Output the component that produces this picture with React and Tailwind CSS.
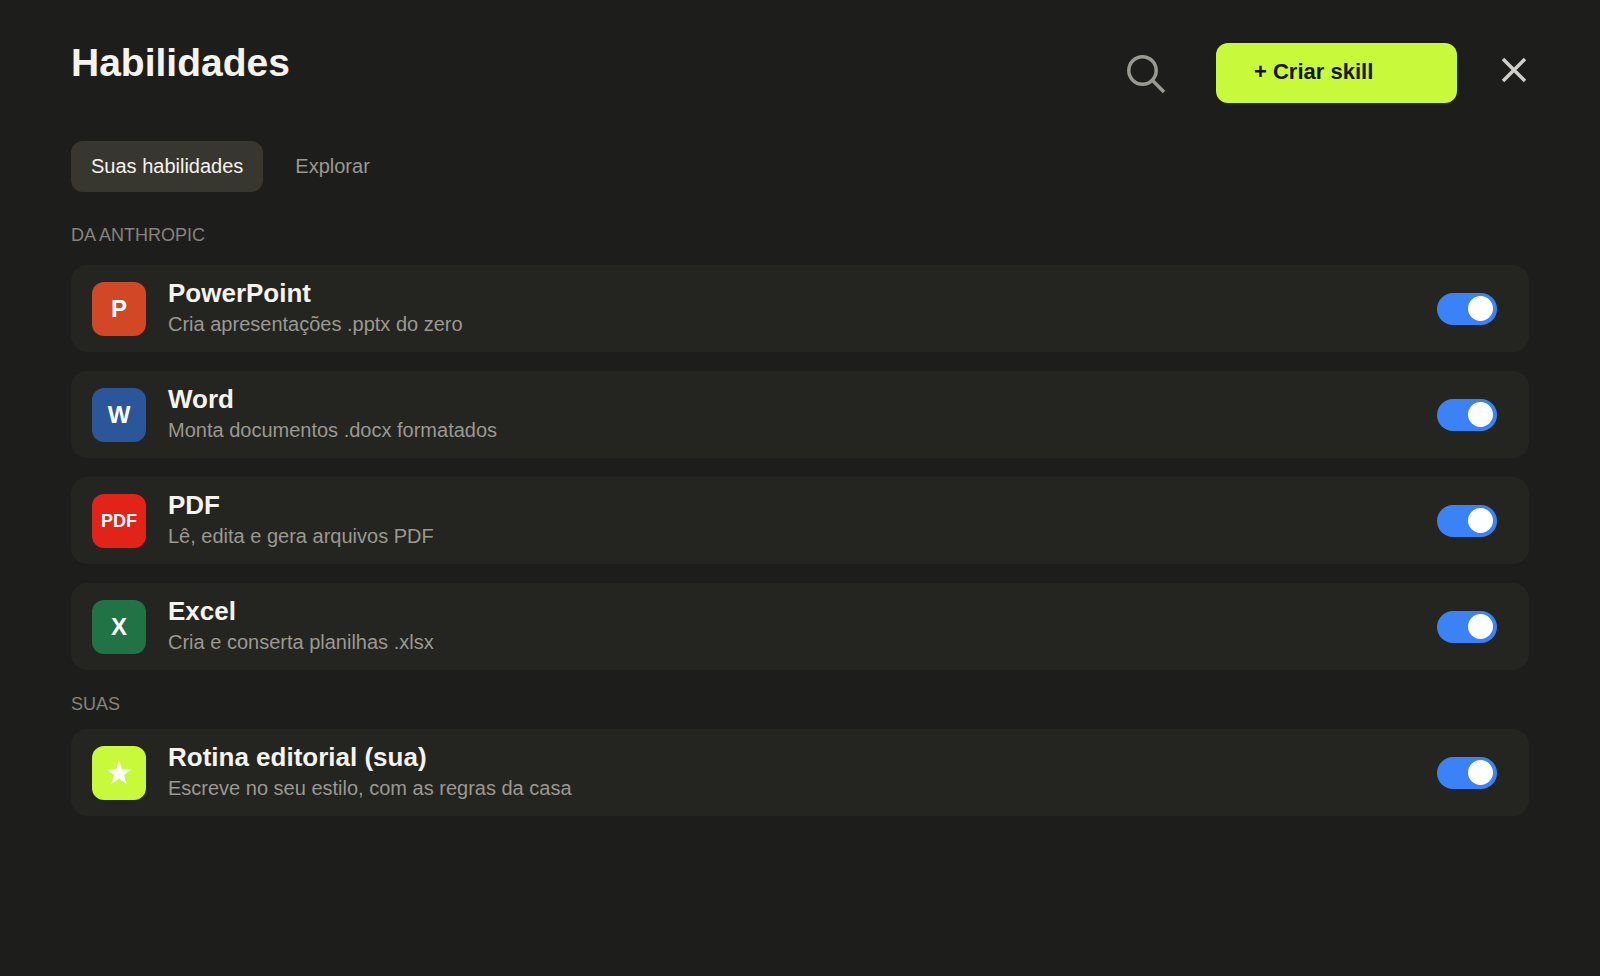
import { useState } from 'react';

const anthropicSkills = [
  { id: 'powerpoint', name: 'PowerPoint', description: 'Cria apresentações .pptx do zero', icon: 'P', iconClass: 'bg-[#d24726] text-2xl' },
  { id: 'word', name: 'Word', description: 'Monta documentos .docx formatados', icon: 'W', iconClass: 'bg-[#2b579a] text-2xl' },
  { id: 'pdf', name: 'PDF', description: 'Lê, edita e gera arquivos PDF', icon: 'PDF', iconClass: 'bg-[#e2231a] text-lg' },
  { id: 'excel', name: 'Excel', description: 'Cria e conserta planilhas .xlsx', icon: 'X', iconClass: 'bg-[#217346] text-2xl' },
];

const ownSkills = [
  { id: 'rotina', name: 'Rotina editorial (sua)', description: 'Escreve no seu estilo, com as regras da casa', icon: <StarIcon />, iconClass: 'bg-[#c8f93a]' },
];

function StarIcon() {
  return (
    <svg viewBox="0 0 26 26" className="size-[26px]" fill="#fff" aria-hidden="true">
      <path d="M13 0 16 9.2H25.6L17.9 14.9 20.8 24.2 13 18.5 5.2 24.2 8.1 14.9 0.4 9.2H10Z" />
    </svg>
  );
}

function SkillRow({ skill, enabled, onToggle }) {
  return (
    <li className="flex min-h-[87px] items-center rounded-2xl bg-[#242420] pl-[21px] pr-8">
      <div className={`flex size-[54px] shrink-0 items-center justify-center rounded-xl font-bold text-white ${skill.iconClass}`}>
        {skill.icon}
      </div>
      <label htmlFor={skill.id} className="ml-[22px] flex-1 pb-0.5">
        <span className="block text-[26px] font-bold leading-8 text-[#f4f3ee]">{skill.name}</span>
        <span className="block text-xl leading-[30px] text-[#9a9992]">{skill.description}</span>
      </label>
      <input
        id={skill.id}
        type="checkbox"
        role="switch"
        checked={enabled}
        onChange={onToggle}
        className="flex h-8 w-[60px] shrink-0 cursor-pointer appearance-none items-center rounded-full bg-[#4a4a45] px-1 before:size-[25px] before:rounded-full before:bg-white checked:justify-end checked:bg-[#3b82f6]"
      />
    </li>
  );
}

export default function SkillsPage() {
  const [tab, setTab] = useState('suas');
  const [disabled, setDisabled] = useState([]);

  const toggle = (id) => {
    setDisabled(disabled.includes(id) ? disabled.filter((d) => d !== id) : [...disabled, id]);
  };

  const tabClass = (name) =>
    name === tab ? 'bg-[#38372f] text-[#f4f3ee]' : 'text-[#9a9992]';

  const renderSkills = (skills) =>
    skills.map((skill) => (
      <SkillRow
        key={skill.id}
        skill={skill}
        enabled={!disabled.includes(skill.id)}
        onToggle={() => toggle(skill.id)}
      />
    ));

  return (
    <div className="min-h-screen bg-[#1d1d1b] px-[71px] pt-[43px] font-['Liberation_Sans',Arial,sans-serif]">
      <header className="flex items-start">
        <h1 className="flex-1 text-[39px] font-bold leading-10 text-[#f4f3ee]">Habilidades</h1>
        <div className="flex h-[60px] items-center">
          <button type="button" aria-label="Buscar" className="mr-[50px] pt-0.5">
            <svg viewBox="0 0 40 40" className="size-10" fill="none" stroke="#9a9992" strokeWidth="3.5" aria-hidden="true">
              <circle cx="16.5" cy="16.5" r="13.7" />
              <path d="M26.3 26.3 38 38" />
            </svg>
          </button>
          <button type="button" className="h-[60px] w-[241px] rounded-xl bg-[#c8f93a] pb-1 pl-[38px] text-left text-[22px] font-bold text-[#141413]">
            + Criar skill
          </button>
          <button type="button" aria-label="Fechar" className="ml-11 mr-0.5 pb-1.5">
            <svg viewBox="0 0 26 26" className="size-[26px]" fill="none" stroke="#d0cfc9" strokeWidth="3.5" aria-hidden="true">
              <path d="M2 2 24 24M24 2 2 24" />
            </svg>
          </button>
        </div>
      </header>

      <nav className="mt-[38px] flex">
        <button type="button" onClick={() => setTab('suas')} className={`h-[51px] rounded-xl px-5 pb-0.5 text-xl ${tabClass('suas')}`}>
          Suas habilidades
        </button>
        <button type="button" onClick={() => setTab('explorar')} className={`ml-3 h-[51px] rounded-xl px-5 pb-0.5 text-xl ${tabClass('explorar')}`}>
          Explorar
        </button>
      </nav>

      <main className="pb-12">
        <h2 className="mt-[33px] text-lg leading-5 text-[#85847d]">DA ANTHROPIC</h2>
        <ul className="mt-5 flex flex-col gap-[19px]">{renderSkills(anthropicSkills)}</ul>

        <h2 className="mt-6 text-lg leading-5 text-[#85847d]">SUAS</h2>
        <ul className="mt-[15px] flex flex-col gap-[19px]">{renderSkills(ownSkills)}</ul>
      </main>
    </div>
  );
}
